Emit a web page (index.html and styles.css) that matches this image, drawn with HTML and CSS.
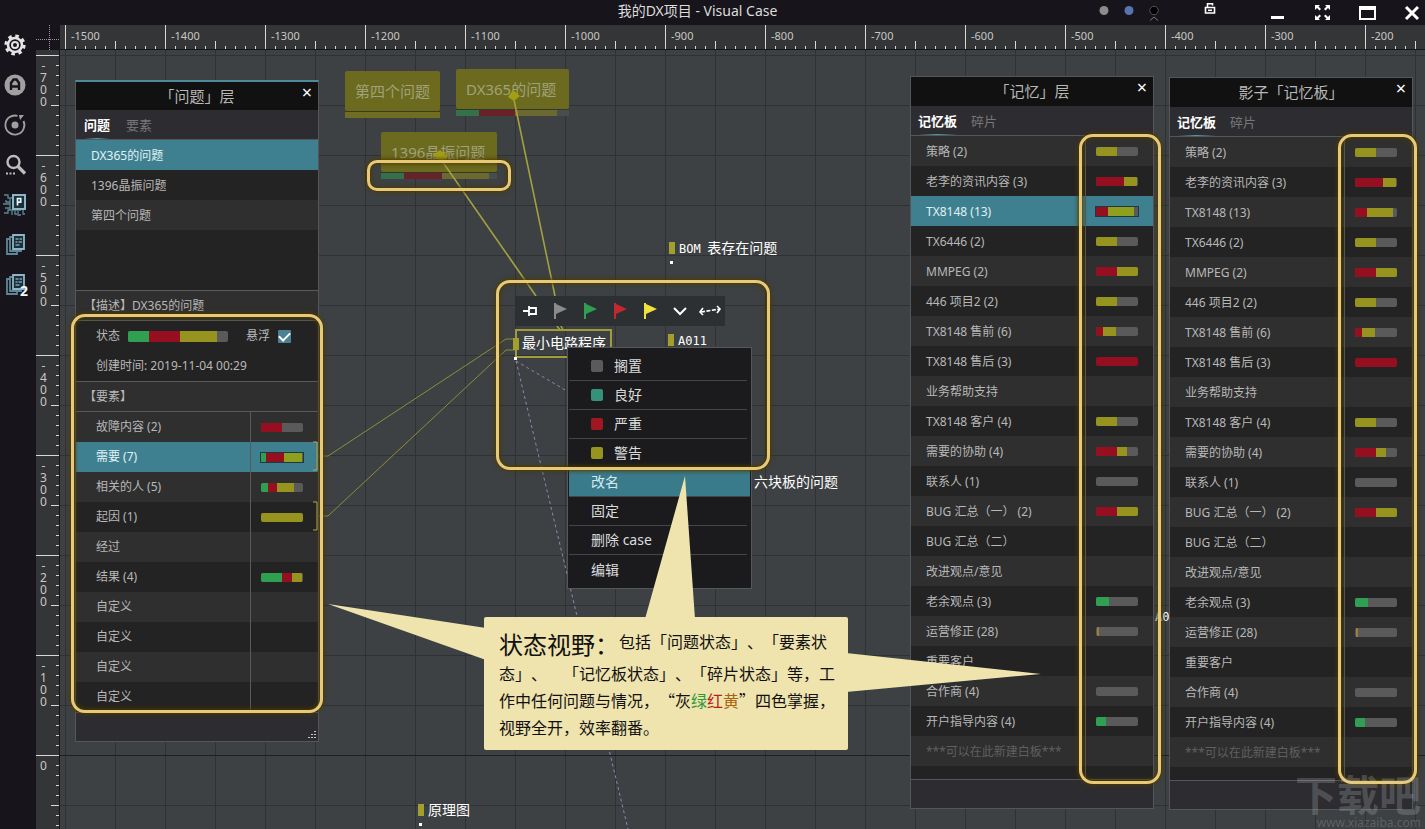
FILE: index.html
```html
<!DOCTYPE html>
<html lang="zh-CN">
<head>
<meta charset="utf-8">
<title>我的DX项目 - Visual Case</title>
<link rel="stylesheet" href="styles.css">
</head>
<body>
<div class="app">
  <header class="titlebar">
    <h1 class="app-title">我的DX项目 - Visual Case</h1>
    <div class="controls">
      <div class="status-group">
        <button class="ctl" aria-label="灰色标记"><svg width="25" height="20"><circle cx="12" cy="7.500" r="4.500" fill="#8c8c8c"/></svg></button>
        <button class="ctl" aria-label="蓝色标记"><svg width="25" height="20"><circle cx="12" cy="7.500" r="4.500" fill="#5874b0"/></svg></button>
        <button class="ctl" aria-label="黑色标记"><svg width="25" height="20" fill="none"><circle cx="12" cy="7.500" r="4.200" fill="#000" stroke="#555"/><path d="M8 17.500l4-3.500 4 3.500" stroke="#777"/></svg></button>
      </div>
      <button class="ctl" aria-label="锁定"><svg width="20" height="20" fill="none" stroke="#fff" stroke-width="1.600"><path d="M5.500 4.500h9v5.500h-9zM7.500 4V.8h5V2.500"/><path d="M8 7.300h4"/></svg></button>
      <div class="window-group">
        <button class="ctl" aria-label="最小化"><svg width="18" height="20"><path d="M3 13h13v3H3z" fill="#fff"/></svg></button>
        <button class="ctl" aria-label="全屏"><svg width="18" height="20" fill="#fff"><path d="M2 2h5L5.500 3.500 8 6 6.500 7.500 4 5 2 7zM17 2v5l-2-2-2.500 2.500L11 6l2.500-2.500L12 2zM2 17v-5l2 2 2.500-2.500L8 13l-2.500 2.500L7 17zM17 17h-5l1.500-1.500L11 13l1.500-1.500L15 14l2-2z"/></svg></button>
        <button class="ctl" aria-label="最大化"><svg width="18" height="20"><path d="M1 3h17v14H1zM3 7v8h13V7z" fill="#fff" fill-rule="evenodd"/></svg></button>
        <button class="ctl" aria-label="关闭"><svg width="18" height="20"><path d="M3 4l12 12M15 4L3 16" stroke="#fff" stroke-width="3"/></svg></button>
      </div>
    </div>
  </header>

  <nav class="sidebar">
    <button class="tool" aria-label="设置"><svg width="24" height="24" viewBox="0 0 24 24" fill="none" stroke="#e4e4e4"><circle cx="12" cy="12" r="9" stroke-width="3.200" stroke-dasharray="3.500 3.569"/><circle cx="12" cy="12" r="7" stroke-width="2.600"/><circle cx="12" cy="12" r="3" stroke-width="2"/></svg></button>
    <button class="tool" aria-label="自动"><svg width="24" height="24" viewBox="0 0 24 24"><circle cx="12" cy="12" r="10.500" fill="#a0a0a0"/><path d="M8 17V10l2.500-3.500h3L16 10v7M8 13.500h8" fill="none" stroke="#17151b" stroke-width="2.400"/></svg></button>
    <button class="tool" aria-label="刷新"><svg width="24" height="24" viewBox="0 0 24 24" fill="none" stroke="#a0a0a0" stroke-width="1.800"><path d="M14.500 2.900A9.500 9.500 0 1 0 20.500 8"/><circle cx="12" cy="12" r="3.500" fill="#a0a0a0" stroke="none"/><path d="M16 2h5l-4 5z" fill="#a0a0a0" stroke="none"/></svg></button>
    <button class="tool" aria-label="搜索"><svg width="24" height="24" viewBox="0 0 24 24" fill="none" stroke="#bdbdbd"><circle cx="10.500" cy="9" r="6" stroke-width="2.400"/><path d="M15 13.500l7 7" stroke-width="3.200"/><path d="M3 20.500h9" stroke-width="2" stroke-dasharray="2 1.500"/></svg></button>
    <button class="tool" aria-label="项目"><svg width="24" height="24" viewBox="0 0 24 24" fill="none" stroke="#5d8798" stroke-width="1.300"><path d="M1 2h4v3h4M3 7v2h4M0 11h7M2 15h5M1 20h4v-3h3M7 6v11h11M9 18v4M12 18v3h2M15 18v4h3M20 17v4h2"/><path d="M10 2h12v14H10z" stroke="#8fb4c3" stroke-width="2" fill="#17303c"/><path d="M14.500 12.500v-7h3.200v3.700h-3.200" stroke="#e9f5fa" stroke-width="1.700"/></svg></button>
    <button class="tool" aria-label="白板"><svg width="24" height="24" viewBox="0 0 24 24" fill="none" stroke="#5d8798" stroke-width="1.800"><path d="M7 6H4v15h10v-2M10 4H7v14h11v-2"/><path d="M10 2h11v14H10z" stroke="#8fb4c3" fill="#17303c"/><path d="M12.500 6h3M16.500 6h2.500M12.500 9h2M15.500 9h3.500M12.500 12h4" stroke="#b9d2dc" stroke-width="1.200"/></svg></button>
    <button class="tool" aria-label="白板二"><svg width="24" height="24" viewBox="0 0 24 24" fill="none" stroke="#5d8798" stroke-width="1.800"><path d="M7 6H4v15h10v-2M10 4H7v14h11v-2"/><path d="M10 2h11v14H10z" stroke="#8fb4c3" fill="#17303c"/><path d="M12.500 6h3M16.500 6h2.500M12.500 9h2M15.500 9h3.500M12.500 12h4" stroke="#b9d2dc" stroke-width="1.200"/></svg><span class="tool-badge">2</span></button>
  </nav>

  <div class="corner"></div>
  <div class="ruler-x"><span>-1500</span><span>-1400</span><span>-1300</span><span>-1200</span><span>-1100</span><span>-1000</span><span>-900</span><span>-800</span><span>-700</span><span>-600</span><span>-500</span><span>-400</span><span>-300</span><span>-200</span></div>
  <div class="ruler-y"><span>-700</span><span>-600</span><span>-500</span><span>-400</span><span>-300</span><span>-200</span><span>-100</span><span>0</span></div>

  <main class="canvas">
    <div class="topic topic-4"><span class="topic-name">第四个问题</span><span class="topic-foot"></span></div>
    <div class="topic topic-dx"><span class="topic-name">DX365的问题</span><span class="bar topic-bar"><i class="g" style="width:20%"></i><i class="r" style="width:32%"></i><i class="y" style="width:37%"></i></span></div>
    <div class="topic topic-1396"><span class="topic-name">1396晶振问题</span><span class="bar topic-bar"><i class="g" style="width:20%"></i><i class="r" style="width:33%"></i><i class="y" style="width:40%"></i></span></div>

    <svg class="layer" width="1365" height="779" viewBox="60 50 1365 779" fill="none">
      <g stroke="#a3a040" stroke-width="1.600">
        <path d="M440 158L536 296M513 95L555 296M557 326l3 4M561 326l2 4"/>
      </g>
      <path d="M508 97l5-7 7 6-6 5zM433 155l7-5 8 7-7 5z" fill="#a39f14"/>
      <path d="M318 456h10L506 339h9M318 516h10L506 350h9" stroke="#8f8d3a"/>
      <path d="M516 361L577 397M516 361L628 829" stroke="#9484b4" stroke-dasharray="3 3"/>
    </svg>

    <div class="note note-bom"><b>BOM</b> 表存在问题</div>
    <div class="note note-a011"><b>A011</b></div>
    <div class="note note-selected">最小电路程序</div>
    <div class="note note-plain note-six">六块板的问题</div>
    <div class="note note-yl">原理图</div>
    <div class="note note-plain note-a0"><b>A011</b></div>

    <div class="toolbar">
      <button class="tb" aria-label="固定"><svg width="18" height="18" fill="none" stroke="#fff" stroke-width="1.800"><path d="M2 9h6M8 4v10M8 6h7v6H8"/></svg></button>
      <button class="tb" aria-label="灰旗"><svg width="18" height="18" fill="#8b8b8b"><path d="M3 1h2v16H3zM5 2l11 5-11 5z"/></svg></button>
      <button class="tb" aria-label="绿旗"><svg width="18" height="18" fill="#2f9f52"><path d="M3 1h2v16H3zM5 2l11 5-11 5z"/></svg></button>
      <button class="tb" aria-label="红旗"><svg width="18" height="18" fill="#c3282e"><path d="M3 1h2v16H3zM5 2l11 5-11 5z"/></svg></button>
      <button class="tb" aria-label="黄旗"><svg width="18" height="18" fill="#f0e23c"><path d="M3 1h2v16H3zM5 2l11 5-11 5z"/></svg></button>
      <button class="tb" aria-label="更多"><svg width="18" height="18" fill="none" stroke="#fff" stroke-width="2"><path d="M3 6l6 6 6-6"/></svg></button>
      <button class="tb" aria-label="连线"><svg width="24" height="18" fill="none" stroke="#fff" stroke-width="1.600"><path d="M5 6L2 10l3 3M19 4l3 3-3 4"/><path d="M3 10l19-3" stroke-dasharray="4 1.500"/></svg></button>
    </div>

    <section class="panel panel-problem">
      <header class="panel-head"><h2>「问题」层</h2><button class="panel-close" aria-label="关闭">×</button></header>
      <div class="tabs"><button class="tab active">问题</button><button class="tab">要素</button></div>
      <ul class="problems"><li class="selected">DX365的问题</li><li>1396晶振问题</li><li>第四个问题</li></ul>
      <h3 class="sub">【描述】DX365的问题</h3>
      <div class="detail">
        <div class="detail-row"><span>状态</span><span class="bar bar-wide"><i class="g" style="width:21%"></i><i class="r" style="width:31%"></i><i class="y" style="width:37%"></i></span><label class="float-label" for="float">悬浮</label><input class="check" type="checkbox" id="float" checked></div>
        <div class="detail-row">创建时间: 2019-11-04 00:29</div>
      </div>
      <h3 class="sub">【要素】</h3>
      <table class="rows rows-indent">
        <tr><td>故障内容 (2)</td><td><span class="bar"><i class="r" style="width:50%"></i></span></td></tr>
        <tr class="selected"><td>需要 (7)</td><td><span class="bar"><i class="g" style="width:14%"></i><i class="r" style="width:43%"></i><i class="y" style="width:43%"></i></span></td></tr>
        <tr><td>相关的人 (5)</td><td><span class="bar"><i class="g" style="width:19%"></i><i class="r" style="width:20%"></i><i class="y" style="width:40%"></i></span></td></tr>
        <tr><td>起因 (1)</td><td><span class="bar"><i class="y" style="width:100%"></i></span></td></tr>
        <tr><td>经过</td><td></td></tr>
        <tr><td>结果 (4)</td><td><span class="bar"><i class="g" style="width:50%"></i><i class="r" style="width:24%"></i><i class="y" style="width:26%"></i></span></td></tr>
        <tr><td>自定义</td><td></td></tr>
        <tr><td>自定义</td><td></td></tr>
        <tr><td>自定义</td><td></td></tr>
        <tr><td>自定义</td><td></td></tr>
      </table>
      <footer class="panel-foot"><svg width="9" height="9" fill="#c8c8c8"><path d="M6 0h2v1H6zM3 3h2v1H3zM6 3h2v1H6zM0 6h2v1H0zM3 6h2v1H3zM6 6h2v1H6z"/></svg></footer>
    </section>

    <section class="panel panel-memory">
      <header class="panel-head"><h2>「记忆」层</h2><button class="panel-close" aria-label="关闭">×</button></header>
      <div class="tabs"><button class="tab active">记忆板</button><button class="tab">碎片</button></div>
      <table class="rows">
        <tr><td>策略 (2)</td><td><span class="bar"><i class="y" style="width:50%"></i></span></td></tr>
        <tr><td>老李的资讯内容 (3)</td><td><span class="bar"><i class="r" style="width:67%"></i><i class="y" style="width:33%"></i></span></td></tr>
        <tr class="selected"><td>TX8148 (13)</td><td><span class="bar"><i class="r" style="width:29%"></i><i class="y" style="width:62%"></i></span></td></tr>
        <tr><td>TX6446 (2)</td><td><span class="bar"><i class="y" style="width:50%"></i></span></td></tr>
        <tr><td>MMPEG (2)</td><td><span class="bar"><i class="r" style="width:50%"></i><i class="y" style="width:50%"></i></span></td></tr>
        <tr><td>446 项目2 (2)</td><td><span class="bar"><i class="y" style="width:50%"></i></span></td></tr>
        <tr><td>TX8148 售前 (6)</td><td><span class="bar"><i class="r" style="width:17%"></i><i class="y" style="width:33%"></i></span></td></tr>
        <tr><td>TX8148 售后 (3)</td><td><span class="bar"><i class="r" style="width:100%"></i></span></td></tr>
        <tr><td>业务帮助支持</td><td></td></tr>
        <tr><td>TX8148 客户 (4)</td><td><span class="bar"><i class="y" style="width:50%"></i></span></td></tr>
        <tr><td>需要的协助 (4)</td><td><span class="bar"><i class="r" style="width:50%"></i><i class="y" style="width:24%"></i></span></td></tr>
        <tr><td>联系人 (1)</td><td><span class="bar"></span></td></tr>
        <tr><td>BUG 汇总（一） (2)</td><td><span class="bar"><i class="r" style="width:50%"></i><i class="y" style="width:50%"></i></span></td></tr>
        <tr><td>BUG 汇总（二）</td><td></td></tr>
        <tr><td>改进观点/意见</td><td></td></tr>
        <tr><td>老余观点 (3)</td><td><span class="bar"><i class="g" style="width:33%"></i></span></td></tr>
        <tr><td>运营修正 (28)</td><td><span class="bar"><i style="width:3%"></i><i class="a" style="width:5%"></i></span></td></tr>
        <tr><td>重要客户</td><td></td></tr>
        <tr><td>合作商 (4)</td><td><span class="bar"></span></td></tr>
        <tr><td>开户指导内容 (4)</td><td><span class="bar"><i class="g" style="width:24%"></i></span></td></tr>
        <tr class="hint"><td>***可以在此新建白板***</td><td></td></tr>
        <tr class="rest"><td></td><td></td></tr>
      </table>
      <footer class="panel-foot"></footer>
    </section>

    <section class="panel panel-shadow">
      <header class="panel-head"><h2>影子「记忆板」</h2><button class="panel-close" aria-label="关闭">×</button></header>
      <div class="tabs"><button class="tab active">记忆板</button><button class="tab">碎片</button></div>
      <table class="rows">
        <tr><td>策略 (2)</td><td><span class="bar"><i class="y" style="width:50%"></i></span></td></tr>
        <tr><td>老李的资讯内容 (3)</td><td><span class="bar"><i class="r" style="width:67%"></i><i class="y" style="width:33%"></i></span></td></tr>
        <tr><td>TX8148 (13)</td><td><span class="bar"><i class="r" style="width:29%"></i><i class="y" style="width:62%"></i></span></td></tr>
        <tr><td>TX6446 (2)</td><td><span class="bar"><i class="y" style="width:50%"></i></span></td></tr>
        <tr><td>MMPEG (2)</td><td><span class="bar"><i class="r" style="width:50%"></i><i class="y" style="width:50%"></i></span></td></tr>
        <tr><td>446 项目2 (2)</td><td><span class="bar"><i class="y" style="width:50%"></i></span></td></tr>
        <tr><td>TX8148 售前 (6)</td><td><span class="bar"><i class="r" style="width:17%"></i><i class="y" style="width:33%"></i></span></td></tr>
        <tr><td>TX8148 售后 (3)</td><td><span class="bar"><i class="r" style="width:100%"></i></span></td></tr>
        <tr><td>业务帮助支持</td><td></td></tr>
        <tr><td>TX8148 客户 (4)</td><td><span class="bar"><i class="y" style="width:50%"></i></span></td></tr>
        <tr><td>需要的协助 (4)</td><td><span class="bar"><i class="r" style="width:50%"></i><i class="y" style="width:24%"></i></span></td></tr>
        <tr><td>联系人 (1)</td><td><span class="bar"></span></td></tr>
        <tr><td>BUG 汇总（一） (2)</td><td><span class="bar"><i class="r" style="width:50%"></i><i class="y" style="width:50%"></i></span></td></tr>
        <tr><td>BUG 汇总（二）</td><td></td></tr>
        <tr><td>改进观点/意见</td><td></td></tr>
        <tr><td>老余观点 (3)</td><td><span class="bar"><i class="g" style="width:33%"></i></span></td></tr>
        <tr><td>运营修正 (28)</td><td><span class="bar"><i style="width:3%"></i><i class="a" style="width:5%"></i></span></td></tr>
        <tr><td>重要客户</td><td></td></tr>
        <tr><td>合作商 (4)</td><td><span class="bar"></span></td></tr>
        <tr><td>开户指导内容 (4)</td><td><span class="bar"><i class="g" style="width:24%"></i></span></td></tr>
        <tr class="hint"><td>***可以在此新建白板***</td><td></td></tr>
        <tr class="rest"><td></td><td></td></tr>
      </table>
      <footer class="panel-foot"></footer>
    </section>

    <div class="menu">
      <button class="item"><i class="swatch s"></i>搁置</button>
      <button class="item"><i class="swatch t"></i>良好</button>
      <button class="item"><i class="swatch r"></i>严重</button>
      <button class="item"><i class="swatch y"></i>警告</button>
      <button class="item active">改名</button>
      <button class="item">固定</button>
      <button class="item">删除 case</button>
      <button class="item">编辑</button>
    </div>

    <div class="mark mark-topic"></div>
    <div class="mark mark-elements"></div>
    <div class="mark mark-menu"></div>
    <div class="mark mark-memory"></div>
    <div class="mark mark-shadow"></div>

    <svg class="layer" width="1365" height="779" viewBox="60 50 1365 779" fill="none">
      <path d="M313 442h4v28h-4M313 502h4v28h-4" stroke="#b5a94c"/>
      <path d="M328 604L486 628v32zM685 476L645 619h50zM1041 674L846 653v39z" fill="#efe3ae"/>
    </svg>
    <div class="callout"><strong>状态视野：</strong>包括「问题状态」、「要素状<br>态」、　「记忆板状态」、「碎片状态」等，工<br>作中任何问题与情况，“灰<em class="c-green">绿</em><em class="c-red">红</em><em class="c-yellow">黄</em>”四色掌握，<br>视野全开，效率翻番。</div>

    <div class="watermark"><b>下载吧</b><span>www.xiazaiba.com</span></div>
  </main>
</div>
</body>
</html>
```
FILE: styles.css
```css
* { box-sizing: border-box; }
body {
  margin: 0;
  background: #17151b;
  color: #b4b4b4;
  font: 12px/18px "Noto Sans", "Noto Sans CJK SC", sans-serif;
  text-spacing-trim: space-all;
}
button { margin: 0; padding: 0; border: 0; background: none; color: inherit; font: inherit; text-align: left; }
h1, h2, h3, ul { margin: 0; padding: 0; font-weight: 400; list-style: none; }
svg { display: block; flex: none; }
i, em { font-style: normal; }

.app {
  display: grid;
  grid-template: 25px 25px 1fr / 36px 24px 1fr;
  height: 100vh;
  overflow: hidden;
}

/* title bar */
.titlebar { grid-column: 1 / -1; display: grid; grid-template-columns: 1fr auto 1fr; }
.app-title { grid-column: 2; margin-right: 30px; font-size: 14px; line-height: 22px; color: #dcdcdc; }
.controls { display: flex; justify-content: flex-end; padding-right: 4px; }
.status-group { display: flex; margin-right: 33px; }
.window-group { display: flex; gap: 27px; margin-left: 48px; }

/* left tool strip */
.sidebar { grid-row: 2 / 4; display: flex; flex-direction: column; }
.tool { display: flex; align-items: center; height: 40px; padding-left: 3px; position: relative; }
.tool-badge { position: absolute; left: 20px; top: 18px; font: 700 14px/16px "Noto Sans", sans-serif; color: #f2fafd; }

/* rulers */
.corner {
  background:
    repeating-linear-gradient(90deg, #999 0 1px, transparent 1px 2px) 0 14px / 100% 1px no-repeat,
    repeating-linear-gradient(#999 0 1px, transparent 1px 2px) 13px 0 / 1px 100% no-repeat,
    #17151b;
}
.ruler-x {
  display: flex;
  overflow: hidden;
  padding-left: 5px;
  border-bottom: 1px solid #161616;
  background:
    linear-gradient(90deg, #d8d8d8 1px, transparent 1px) 5px 0 / 100px 24px repeat-x,
    linear-gradient(90deg, #d8d8d8 1px, transparent 1px) 5px 16px / 50px 8px repeat-x,
    linear-gradient(90deg, #d8d8d8 1px, transparent 1px) 5px 21px / 10px 3px repeat-x,
    #343536;
}
.ruler-x span { flex: none; width: 100px; padding-left: 6px; font-size: 11px; line-height: 22px; color: #c8c8c8; }
.ruler-y {
  overflow: hidden;
  padding-top: 5px;
  border-right: 1px solid #161616;
  background:
    linear-gradient(#d8d8d8 1px, transparent 1px) 0 5px / 23px 100px repeat-y,
    linear-gradient(#d8d8d8 1px, transparent 1px) 15px 5px / 8px 50px repeat-y,
    linear-gradient(#d8d8d8 1px, transparent 1px) 20px 5px / 3px 10px repeat-y,
    #343536;
}
.ruler-y span { display: block; width: 14px; height: 100px; padding: 5px 3px 0 4px; font-size: 12px; line-height: 12px; text-align: center; word-break: break-all; color: #c8c8c8; }

/* canvas */
.canvas {
  position: relative;
  overflow: hidden;
  background:
    linear-gradient(#1d1f20 1px, transparent 1px) 0 705px / 100% 1px no-repeat,
    linear-gradient(90deg, #2f3234 1px, transparent 1px) 5px 0 / 50px 50px,
    linear-gradient(#2f3234 1px, transparent 1px) 0 5px / 50px 50px,
    #3d4143;
}
.layer { position: absolute; left: 0; top: 0; }

.bar { display: flex; width: 42px; height: 9px; overflow: hidden; border-radius: 2px; background: #5a5a5a; }
.bar i { height: 100%; }
.g { background: #2f9f52; }
.r { background: #950f20; }
.y { background: #97931f; }
.a { background: #9a7f3c; }

.topic { position: absolute; color: #a1a27c; font-size: 15px; }
.topic-name { display: block; padding: 0 10px; border-radius: 2px; background: #6b6a1e; line-height: 40px; white-space: nowrap; }
.topic-foot { display: block; height: 7px; border-top: 1px solid #3c3c1c; background: #6f6d22; }
.topic-bar { width: 100%; height: 7px; border-top: 1px solid #34372c; border-radius: 0; background: #4a4d4f; }
.topic-bar .g { background: #347049; }
.topic-bar .r { background: #6a222a; }
.topic-bar .y { background: #6b6930; }
.topic-4 { left: 285px; top: 21px; }
.topic-dx { left: 396px; top: 19px; min-width: 113px; }
.topic-1396 { left: 321px; top: 82px; min-width: 116px; }

.note { position: absolute; padding-left: 10px; font-size: 14px; line-height: 20px; color: #fff; white-space: nowrap; }
.note b { font: 12px/20px "DejaVu Sans Mono", monospace; }
.note::before { content: ""; position: absolute; left: 0; top: 4px; width: 6px; height: 12px; background: #a39f2c; }
.note::after { content: ""; position: absolute; left: 1px; top: 23px; width: 3px; height: 3px; background: #fff; }
.note-plain { padding-left: 0; }
.note-plain::before, .note-plain::after { display: none; }
.note-bom { left: 609px; top: 188px; }
.note-bom b { margin-right: 3px; }
.note-a011 { left: 608px; top: 280px; }
.note-a011::after { display: none; }
.note-selected { left: 455px; top: 279px; height: 29px; padding: 2px 4px 2px 5px; border: 2px solid #a09c3e; }
.note-selected::before { left: -4px; top: 7px; }
.note-selected::after { left: -3px; top: 26px; }
.note-six { left: 694px; top: 422px; }
.note-yl { left: 358px; top: 750px; }
.note-a0 { left: 1095px; top: 556px; }

.toolbar { position: absolute; left: 455px; top: 246px; display: flex; background: #2c3032; }
.tb { display: flex; align-items: center; justify-content: center; width: 30px; height: 30px; }

/* floating panels */
.panel { position: absolute; width: 244px; border: 1px solid #55565a; background: #232323; color: #b8b8b8; }
.panel-problem { left: 15px; top: 30px; border-top: 2px solid #4d8a9b; }
.panel-memory { left: 850px; top: 26px; }
.panel-shadow { left: 1109px; top: 27px; }
.panel-head { position: relative; height: 29px; background: #111; text-align: center; }
.panel-problem .panel-head { height: 28px; }
.panel-head h2 { font-size: 15px; line-height: 28px; }
.panel-close { position: absolute; right: 6px; top: 0; font-size: 18px; line-height: 20px; color: #fff; }
.tabs { display: flex; gap: 14px; height: 30px; padding-left: 7px; border-bottom: 1px solid #55565a; background: #2d2c30; }
.panel-problem .tabs { gap: 16px; padding-left: 8px; }
.tab { font-size: 13px; line-height: 31px; color: #77777a; }
.tab.active {
  font-weight: 700; color: #fff;
  background: linear-gradient(90deg, transparent, #4d9ab0, transparent) 0 100% / 100% 1px no-repeat;
}
.problems { height: 150px; line-height: 30px; }
.problems li { padding: 1px 0 0 15px; height: 30px; }
.problems li:nth-child(odd) { background: #2f2f2f; }
.problems li.selected { background: #3f8090; color: #e0f2f5; }
.sub { padding-left: 8px; border-top: 1px solid #5a5a5a; border-bottom: 1px solid #5a5a5a; background: #2f2f2f; font-size: 12px; line-height: 29px; }
.detail-row { display: flex; align-items: center; height: 30px; padding-left: 20px; }
.bar-wide { width: 100px; height: 11px; margin-left: 8px; }
.float-label { margin-left: 18px; }
.check { appearance: none; display: grid; place-items: center; width: 13px; height: 13px; margin: 0 0 0 8px; border-radius: 1px; background: #4b8193; }
.check:checked::after { content: ""; width: 5px; height: 9px; margin-bottom: 2px; border: solid #fff; border-width: 0 2px 2px 0; transform: rotate(45deg); }

.rows { width: 100%; border-collapse: collapse; table-layout: fixed; }
.rows tr { height: 30px; }
.rows tr:nth-child(odd) { background: #2f2f2f; }
.rows tr.selected { background: #3f8090; color: #e0f2f5; }
.rows td { padding: 0 0 0 15px; white-space: nowrap; }
.rows td:first-child { width: 174px; padding-top: 2px; }
.rows td:last-child { padding-left: 10px; border-left: 1px solid #5a5a5a; }
.rows-indent td:first-child { padding: 0 0 0 20px; }
.rows .selected .bar { outline: 1px solid #1d3a42; border-radius: 0; }
.rows .selected .y { background: #8fa01f; }
.rows .hint { color: #5f5f5f; }
.rows .rest { height: 13px; }
.panel-foot { display: flex; justify-content: flex-end; align-items: flex-end; height: 29px; padding: 1px; border-top: 1px solid #55565a; background: #2d2c30; }

/* context menu */
.menu { position: absolute; left: 507px; top: 297px; width: 185px; padding: 4px 1px; border: 1px solid #55565a; background: #1b1b1e; color: #dcdcdc; font-size: 14px; }
.item { display: flex; align-items: center; gap: 11px; width: 178px; height: 29px; padding-left: 22px; border-bottom: 1px solid #454548; }
.item:last-child { border-bottom: 0; }
.item.active { width: 181px; background: #3a7b8b; color: #d5eaee; }
.swatch { width: 12px; height: 12px; border-radius: 2px; }
.swatch.s { background: #5a5a5a; }
.swatch.t { background: #36907a; }
.swatch.r { background: #a01722; }

/* annotations */
.mark { position: absolute; border: 3px solid #e8ca76; border-radius: 14px; box-shadow: 0 0 4px 1px #4d3a00, inset 0 0 4px 1px #4d3a00; pointer-events: none; }
.mark-topic { left: 307px; top: 110px; width: 144px; height: 31px; border-radius: 10px; }
.mark-elements { left: 11px; top: 264px; width: 252px; height: 399px; }
.mark-menu { left: 436px; top: 230px; width: 274px; height: 190px; }
.mark-memory { left: 1019px; top: 84px; width: 82px; height: 650px; }
.mark-shadow { left: 1278px; top: 84px; width: 79px; height: 650px; }

.callout { position: absolute; left: 424px; top: 567px; width: 364px; padding: 10px 0 9px 15px; border-radius: 2px; background: #efe3ae; color: #111; font: 16px/27px "Noto Sans CJK SC", sans-serif; white-space: nowrap; }
.callout strong { font-size: 24px; font-weight: 400; line-height: 33px; vertical-align: middle; }
.c-green { color: #2f9a3c; }
.c-red { color: #b52318; }
.c-yellow { color: #a86410; }

.watermark { position: absolute; right: 4px; bottom: 0; display: flex; flex-direction: column; align-items: flex-end; color: rgba(200, 205, 210, .24); }
.watermark b { font: 700 42px/46px "Noto Sans CJK SC", sans-serif; }
.watermark span { font-size: 12px; line-height: 13px; }
```
